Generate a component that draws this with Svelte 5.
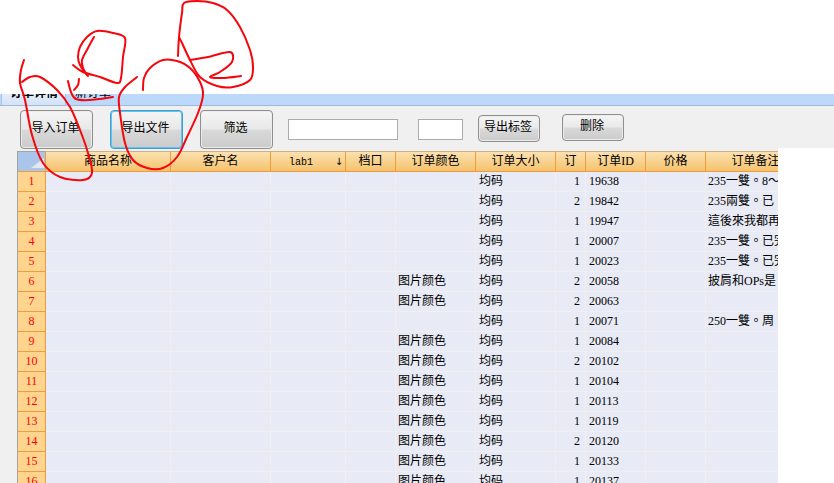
<script>
  const columns = [
    { title: '商品名称' },
    { title: '客户名' },
    { title: 'lab1', sort: true },
    { title: '档口' },
    { title: '订单颜色' },
    { title: '订单大小' },
    { title: '订' },
    { title: '订单ID' },
    { title: '价格' },
    { title: '订单备注' }
  ]

  const img = '图片颜色'
  const rows = [
    ['', 1, 19638, '235一雙。8～12'],
    ['', 2, 19842, '235兩雙。已'],
    ['', 1, 19947, '這後來我都再'],
    ['', 1, 20007, '235一雙。已完'],
    ['', 1, 20023, '235一雙。已完'],
    [img, 2, 20058, '披肩和OPs是'],
    [img, 2, 20063, ''],
    ['', 1, 20071, '250一雙。周'],
    [img, 1, 20084, ''],
    [img, 2, 20102, ''],
    [img, 1, 20104, ''],
    [img, 1, 20113, ''],
    [img, 1, 20119, ''],
    [img, 2, 20120, ''],
    [img, 1, 20133, ''],
    [img, 1, 20137, '']
  ]

  const scribbles = [
    [[24,60],[21,70],[20,83],[25,100],[32,135],[43,163],[60,177],[83,180],[92,173],[88,153],[80,130],[70,107],[57,90],[40,77],[30,77],[22,82]],
    [[94,37],[88,48],[82,60],[83,68],[88,76]],
    [[73,65],[83,72],[100,77],[117,83],[121,78],[123,57],[125,38],[113,33],[97,31],[87,37],[80,47],[78,57],[80,65],[87,75]],
    [[79,79],[78,85],[74,90]],
    [[68,81],[71,92],[76,99],[90,100],[113,97]],
    [[143,90],[144,78],[150,68],[163,60],[177,61],[190,68],[200,82],[203,95],[198,113],[187,137],[177,157],[163,168],[147,168],[133,160],[125,143],[120,113],[119,97],[125,87],[137,77]],
    [[178,56],[179,37],[182,13],[184,3],[197,1],[213,3],[227,10],[240,27],[250,50],[253,67],[250,80],[233,87],[217,86],[200,77],[190,60],[182,43],[179,37]],
    [[190,60],[208,57],[230,52],[232,62],[220,72],[210,77],[223,78],[241,76]]
  ]

  // catmull-rom through the points of a hand drawn stroke
  const toPath = (pts) => {
    let d = `M${pts[0][0]} ${pts[0][1]}`
    for (let i = 0; i < pts.length - 1; i++) {
      const p0 = pts[i - 1] || pts[i]
      const p1 = pts[i]
      const p2 = pts[i + 1]
      const p3 = pts[i + 2] || p2
      const c1x = p1[0] + (p2[0] - p0[0]) / 6
      const c1y = p1[1] + (p2[1] - p0[1]) / 6
      const c2x = p2[0] - (p3[0] - p1[0]) / 6
      const c2y = p2[1] - (p3[1] - p1[1]) / 6
      d += ` C${c1x} ${c1y} ${c2x} ${c2y} ${p2[0]} ${p2[1]}`
    }
    return d
  }
</script>

<div class="page">
  <div class="blank"></div>

  <div class="tabs">
    <div class="tab active"><span>订单详情</span></div>
    <div class="tab"><span>新订单</span></div>
  </div>

  <div class="toolbar">
    <button class="btn big">导入订单</button>
    <button class="btn big focus">导出文件</button>
    <button class="btn big">筛选</button>
    <input class="field wide" />
    <input class="field narrow" />
    <button class="btn small">导出标签</button>
    <button class="btn small del">删除</button>
  </div>

  <div class="grid-wrap">
    <div class="grid">
      <div class="row head">
        <div class="corner"></div>
        {#each columns as col}
          <div class="hcell" class:sort={col.sort}>
            <span class:mono={col.sort}>{col.title}</span>
            {#if col.sort}<span class="arrow">↓</span>{/if}
          </div>
        {/each}
      </div>

      {#each rows as r, i}
        <div class="row">
          <div class="num">{i + 1}</div>
          <div class="cell"></div>
          <div class="cell"></div>
          <div class="cell"></div>
          <div class="cell"></div>
          <div class="cell color">{r[0]}</div>
          <div class="cell">均码</div>
          <div class="cell right">{r[1]}</div>
          <div class="cell">{r[2]}</div>
          <div class="cell"></div>
          <div class="cell note">{r[3]}</div>
        </div>
      {/each}
    </div>
  </div>

  <svg class="ink" width="834" height="483" viewBox="0 0 834 483" fill="none">
    {#each scribbles as s}
      <path d={toPath(s)} />
    {/each}
  </svg>
</div>

<style>
  :global(body) {
    margin: 0;
    background: #fff;
  }

  .page {
    position: relative;
    width: 834px;
    height: 483px;
    overflow: hidden;
    font: 12px/20px "Liberation Serif", "Noto Sans CJK SC", sans-serif;
    color: #000;
  }

  .blank {
    height: 94px;
  }

  .tabs {
    display: flex;
    height: 11px;
    overflow: hidden;
    background: #bcd9fc;
    border-bottom: 1px solid #9db9de;
  }

  .tab {
    height: 11px;
    line-height: 12px;
  }

  .tab span {
    display: block;
    margin-top: -7px;
  }

  .tab.active {
    width: 55px;
    margin-left: 1px;
    padding-left: 8px;
    background: linear-gradient(#e4edfa, #d3e2f6);
    border-left: 1px solid #a9c2e2;
    border-right: 1px solid #a9c2e2;
    font-weight: bold;
  }

  .tab:not(.active) {
    margin-left: 9px;
  }

  .toolbar {
    display: flex;
    align-items: flex-start;
    height: 42px;
    padding-left: 20px;
    background: #f0f0f0;
  }

  .btn {
    box-sizing: border-box;
    padding: 0 2px 4px 0;
    border: 1px solid #8e8e8e;
    border-radius: 4px;
    background: linear-gradient(#f5f5f5 0, #e9e9e9 48%, #d9d9d9 52%, #cbcbcb 100%);
    box-shadow: inset 0 0 0 1px #ececec;
    font: inherit;
    color: #000;
  }

  .btn.big {
    width: 73px;
    height: 39px;
    margin: 4px 17px 0 0;
  }

  .btn.focus {
    border-color: #37a0d6;
    box-shadow: inset 0 0 0 1px #6cc0ea;
  }

  .btn.small {
    width: 62px;
    height: 27px;
    margin: 9px 0 0 15px;
  }

  .btn.del {
    margin: 8px 0 0 22px;
  }

  .field {
    box-sizing: border-box;
    height: 21px;
    padding: 0;
    border: 1px solid #ababab;
    background: #fff;
    border-radius: 0;
    outline: none;
    margin-top: 13px;
  }

  .field.wide {
    width: 110px;
    margin-left: -2px;
  }

  .field.narrow {
    width: 45px;
    margin-left: 20px;
  }

  .grid-wrap {
    box-sizing: border-box;
    width: 778px;
    height: 335px;
    padding: 3px 0 0 17px;
    background: #f0f0f0;
  }

  .grid {
    width: 761px;
    overflow: hidden;
    border-left: 1px solid #a3a3a3;
    box-sizing: border-box;
  }

  .row {
    display: grid;
    grid-template-columns: 28px 125px 100px 75px 50px 80px 80px 30px 60px 60px 100px;
    width: 788px;
    height: 20px;
  }

  .row.head {
    height: 21px;
  }

  .corner {
    position: relative;
    box-sizing: border-box;
    background: #a9c5ea;
    border-top: 1px solid #a3a3a3;
    border-right: 1px solid #f09c3c;
    border-bottom: 1px solid #f09c3c;
  }

  .corner::after {
    content: "";
    position: absolute;
    right: 1px;
    bottom: 3px;
    border-style: solid;
    border-width: 0 0 10px 13px;
    border-color: transparent transparent #e2e7f0 transparent;
  }

  .hcell {
    position: relative;
    box-sizing: border-box;
    text-align: center;
    line-height: 19px;
    white-space: nowrap;
    background: linear-gradient(#fbe1b0, #f5c26d);
    border-top: 1px solid #cdb184;
    border-right: 1px solid #f09c3c;
    border-bottom: 1px solid #f09c3c;
  }

  .mono {
    font: 10px "Liberation Mono", monospace;
    margin-right: 14px;
  }

  .arrow {
    position: absolute;
    right: 0;
    top: 0;
    width: 12px;
    font: 10px/19px "DejaVu Sans", sans-serif;
  }

  .num {
    box-sizing: border-box;
    text-align: center;
    line-height: 19px;
    color: #f00;
    background: #ffd48f;
    border-right: 1px solid #f09c3c;
    border-bottom: 1px solid #f09c3c;
  }

  .cell {
    box-sizing: border-box;
    padding: 0 3px;
    overflow: hidden;
    white-space: nowrap;
    line-height: 19px;
    background: #e8ebf5;
    border-right: 1px solid #f0f0f0;
    border-bottom: 1px solid #f0f0f0;
  }

  .color {
    padding-left: 2px;
  }

  .right {
    text-align: right;
    padding-right: 5px;
  }

  .note {
    font-family: "Liberation Serif", "Noto Sans CJK TC", sans-serif;
    padding-left: 2px;
  }

  .ink {
    position: absolute;
    left: 0;
    top: 0;
    pointer-events: none;
  }

  .ink path {
    stroke: #f5060c;
    stroke-width: 2;
    stroke-linecap: round;
    stroke-linejoin: round;
  }
</style>
